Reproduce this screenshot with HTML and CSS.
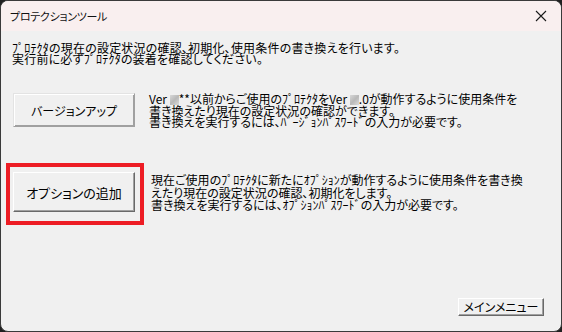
FILE: index.html
```html
<!DOCTYPE html>
<html lang="ja">
<head>
<meta charset="utf-8">
<link rel="stylesheet" href="styles.css">
</head>
<body>
<div class="window">
  <div class="titlebar">
    <span class="title">プロテクションツール</span>
    <svg class="close" width="12" height="12" viewBox="0 0 12 12"><path d="M1 1 L11 11 M11 1 L1 11" stroke="#1a1a1a" stroke-width="1.1" fill="none"/></svg>
  </div>
  <div class="content">
    <p class="intro">ﾌﾟﾛﾃｸﾀの現在の設定状況の確認、初期化、使用条件の書き換えを行います。<br>実行前に必ずﾌﾟﾛﾃｸﾀの装着を確認してください。</p>
    <div class="row row-upgrade">
      <button class="btn btn-big">バージョンアップ</button>
      <p class="desc">Ver <span class="blur"></span>**以前からご使用のﾌﾟﾛﾃｸﾀをVer <span class="blur"></span>.0が動作するように使用条件を<br>書き換えたり現在の設定状況の確認ができます。<br>書き換えを実行するには、ﾊﾞｰｼﾞｮﾝﾊﾟｽﾜｰﾄﾞの入力が必要です。</p>
    </div>
    <div class="row row-option">
      <div class="highlight">
        <button class="btn btn-big btn-tall">オプションの追加</button>
      </div>
      <p class="desc desc-option">現在ご使用のﾌﾟﾛﾃｸﾀに新たにｵﾌﾟｼｮﾝが動作するように使用条件を書き換<br>えたり現在の設定状況の確認、初期化をします。<br>書き換えを実行するには、ｵﾌﾟｼｮﾝﾊﾟｽﾜｰﾄﾞの入力が必要です。</p>
    </div>
    <div class="footer">
      <button class="btn btn-small">メインメニュー</button>
    </div>
  </div>
</div>
</body>
</html>
```
FILE: styles.css
```css
* { box-sizing: border-box; }
html, body { margin: 0; padding: 0; background: #202020; }
body {
  width: 562px;
  height: 332px;
  font-family: "Noto Sans CJK JP", sans-serif;
  font-size: 12px;
  color: #000;
  font-feature-settings: "palt";
}
.window {
  width: 562px;
  height: 332px;
  border: 1px solid #3a3a3a;
  border-radius: 8px;
  background: #f0f0f0;
  overflow: hidden;
  display: flex;
  flex-direction: column;
}
.titlebar {
  height: 30px;
  flex: none;
  background: #f9efef;
  display: flex;
  align-items: center;
  justify-content: space-between;
  padding: 0 14px 0 9px;
}
.title {
  font-size: 11px;
  letter-spacing: -0.3px;
  color: #111;
}
.content {
  flex: 1;
  display: flex;
  flex-direction: column;
  padding: 0 17px 15px 5px;
}
.intro {
  margin: 11px 0 0 6px;
  line-height: 11px;
  letter-spacing: 0.2px;
  white-space: nowrap;
}
.row {
  display: flex;
  align-items: flex-start;
}
.row-upgrade {
  margin-top: 29px;
  padding-left: 7px;
}
.desc {
  margin: 0 0 0 14px;
  line-height: 11px;
  white-space: nowrap;
}
.row-option {
  margin-top: 36px;
}
.highlight {
  border: 4px solid #ed1c24;
  padding: 5px 5px 9px 3px;
}
.desc-option {
  margin: 11px 0 0 7px;
  line-height: 12.5px;
}
.btn {
  font-family: "Noto Sans CJK JP", sans-serif;
  font-feature-settings: "palt";
  font-size: 12px;
  color: #000;
  background: #f0f0f0;
  border: 1px solid #a0a0a0;
  border-top-color: #e3e3e3;
  border-left-color: #e3e3e3;
  box-shadow: inset 1px 1px #fff, inset -1px -1px #a0a0a0;
  padding: 0;
  margin: 0;
}
.btn-big {
  width: 122px;
  height: 34px;
}
.btn-tall {
  height: 40px;
  font-size: 13px;
  border-color: #fff #696969 #696969 #fff;
  box-shadow: inset -1px -1px #a0a0a0;
}
.blur {
  display: inline-block;
  width: 9px;
  height: 10px;
  vertical-align: -1px;
  background: linear-gradient(135deg, #d8d8d8, #b8b8b8 50%, #dcdcdc);
}
.footer {
  margin-top: auto;
  display: flex;
  justify-content: flex-end;
}
.btn-small {
  width: 86px;
  height: 18px;
  line-height: 14px;
  border-color: #fff #696969 #696969 #fff;
  box-shadow: inset -1px -1px #a0a0a0;
}
```
